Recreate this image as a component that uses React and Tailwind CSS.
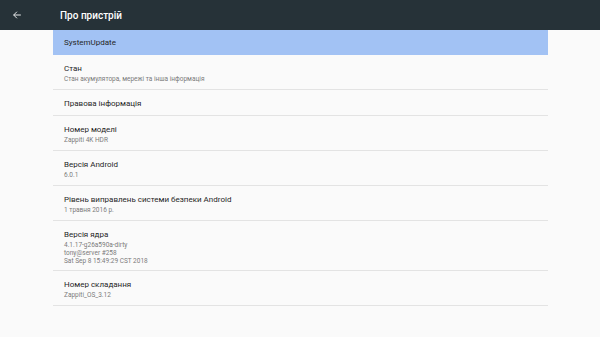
import React from 'react';

const rows = [
  { title: 'Стан', lines: ['Стан акумулятора, мережі та інша інформація'], h: 'h-[35px]' },
  { title: 'Правова інформація', lines: [], h: 'h-[26px]' },
  { title: 'Номер моделі', lines: ['Zappiti 4K HDR'], h: 'h-[35px]' },
  { title: 'Версія Android', lines: ['6.0.1'], h: 'h-[35px]' },
  { title: 'Рівень виправлень системи безпеки Android', lines: ['1 травня 2016 р.'], h: 'h-[35px]' },
  {
    title: 'Версія ядра',
    lines: ['4.1.17-g26a590a-dirty', 'tony@server #258', 'Sat Sep 8 15:49:29 CST 2018'],
    h: 'h-[50px]',
  },
  { title: 'Номер складання', lines: ['Zappiti_OS_3.12'], h: 'h-[35px]' },
];

const Row = ({ title, lines, h }) => (
  <div className={`${h} border-b border-[#e3e3e3] pt-[9px] pl-[11px]`}>
    <div className="text-[8px] leading-[10px] text-[#262626]">{title}</div>
    {lines.length > 0 && (
      <div className="mt-[1px]">
        {lines.map((l) => (
          <div key={l} className="text-[6.5px] leading-[8px] text-[#7a7a7a]">
            {l}
          </div>
        ))}
      </div>
    )}
  </div>
);

export default function App() {
  return (
    <div
      className="w-[600px] h-[337px] bg-[#fafafa] overflow-hidden"
      style={{ fontFamily: 'Roboto, "Noto Sans", sans-serif' }}
    >
      {/* шапка */}
      <div className="h-[30px] bg-[#263238] flex items-center">
        <svg className="ml-[12px] w-[10px] h-[10px]" viewBox="0 0 24 24" fill="none" stroke="#e6e9ea" strokeWidth="2.4" strokeLinecap="square">
          <path d="M20 12H5M11 5l-7 7 7 7" />
        </svg>
        <div className="ml-[38px] text-[10px] font-medium text-white">Про пристрій</div>
      </div>

      {/* список */}
      <div className="ml-[53px] w-[495px]">
        <div className="h-[25px] bg-[#a2c2f4] pt-[8px] pl-[11px]">
          <div className="text-[8px] leading-[10px] text-[#262626]">SystemUpdate</div>
        </div>
        {rows.map((r) => (
          <Row key={r.title} {...r} />
        ))}
      </div>
    </div>
  );
}
